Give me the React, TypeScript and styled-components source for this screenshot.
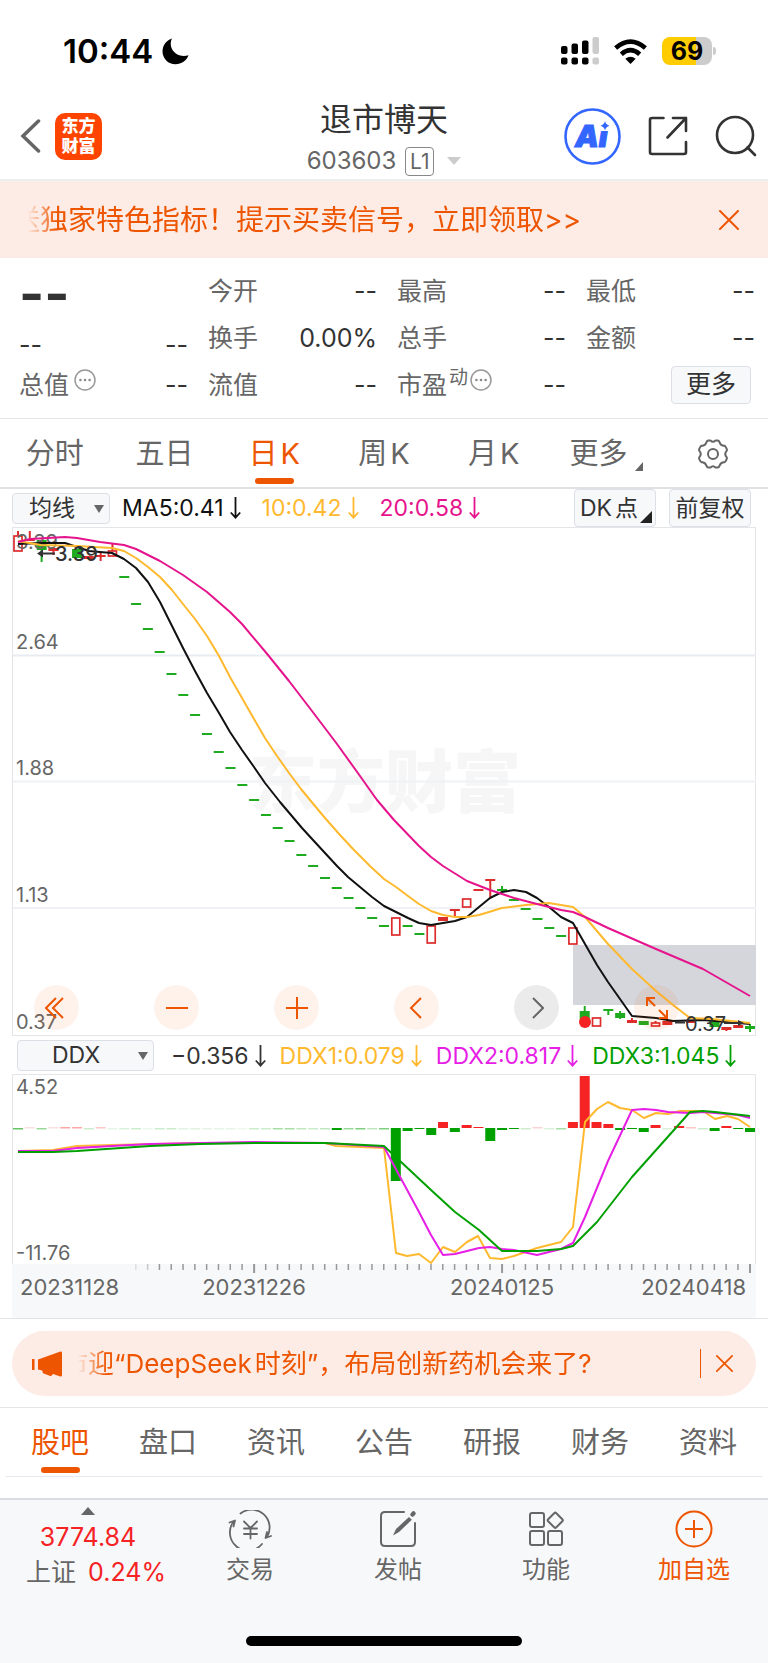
import React from 'react';
import styled, { createGlobalStyle } from 'styled-components';

const ORANGE = '#ee5500';
const GREY = '#666666';
const INK = '#333333';
const LINE = '#e3e5e9';
const PANEL = '#f7f8fa';
const PEACH = '#fdece5';
const UP = '#f52323';
const DOWN = '#00a000';
const YELLOW = '#ffb92e';
const PINK = '#e6148c';
const MAGENTA = '#e61ee6';

const Global = createGlobalStyle`
  *, *::before, *::after { box-sizing: border-box; }
  body {
    margin: 0;
    background: #fff;
    color: ${INK};
    font-family: Inter, "Noto Sans CJK SC", sans-serif;
    -webkit-font-smoothing: antialiased;
  }
  button, select {
    font: inherit;
    color: inherit;
    margin: 0;
    padding: 0;
    border: 0;
    background: none;
    cursor: pointer;
  }
  svg { display: block; flex: none; }
`;

/* ---------- status bar ---------- */

const StatusBar = styled.div`
  display: flex;
  justify-content: space-between;
  align-items: center;
  height: 96px;
  padding: 6px 52px 0 63px;
`;

const StatusGroup = styled.div<{ $gap: number }>`
  display: flex;
  align-items: center;
  gap: ${p => p.$gap}px;
`;

const Clock = styled.span`
  font-size: 33px;
  line-height: 40px;
  font-weight: 600;
  color: #000;
`;

const BatteryBody = styled.span`
  display: flex;
  align-items: center;
  justify-content: center;
  width: 50px;
  height: 28px;
  border-radius: 8px;
  background: linear-gradient(90deg, #ffcc00 69%, #cccccc 69%);
  color: #000;
  font-size: 25px;
  line-height: 28px;
  font-weight: 700;
`;

const Battery = styled.span`
  display: flex;
  align-items: center;
  gap: 1px;
  &::after {
    content: '';
    width: 3px;
    height: 8px;
    border-radius: 0 3px 3px 0;
    background: #cccccc;
  }
`;

/* ---------- header ---------- */

const Header = styled.header`
  display: grid;
  grid-template-columns: 1fr auto 1fr;
  align-items: center;
  height: 85px;
  padding: 0 11px 4px;
  border-bottom: 2px solid #eceef0;
`;

const HeaderSide = styled.div<{ $end?: boolean }>`
  display: flex;
  align-items: center;
  justify-content: ${p => (p.$end ? 'flex-end' : 'flex-start')};
  gap: ${p => (p.$end ? 27 : 14)}px;
  padding: 0 0 3px ${p => (p.$end ? 0 : 9)}px;
`;

const AppLogo = styled.span`
  display: flex;
  align-items: center;
  justify-content: center;
  width: 47px;
  height: 47px;
  border-radius: 10px;
  background: #ff4400;
  color: #fff;
  font-size: 17px;
  line-height: 20px;
  font-weight: 900;
  text-align: center;
`;

const TitleBlock = styled.div`
  display: flex;
  flex-direction: column;
  align-items: center;
  padding-top: 1px;
`;

const Title = styled.h1`
  margin: 0;
  font-size: 32px;
  line-height: 46px;
  font-weight: 400;
`;

const CodeLine = styled.div`
  display: flex;
  align-items: center;
  height: 36px;
  color: ${GREY};
  font-size: 24px;
  line-height: 30px;
`;

const LevelTag = styled.span`
  margin: 0 13px 0 9px;
  width: 29px;
  height: 29px;
  border: 1px solid #888;
  border-radius: 4px;
  font-size: 21px;
  line-height: 27px;
  text-align: center;
`;

const IconButton = styled.button`
  display: flex;
  align-items: center;
  justify-content: center;
`;

/* ---------- notices ---------- */

const Promo = styled.div`
  display: flex;
  align-items: center;
  height: 77px;
  padding: 0 29px 0 12px;
  background: ${PEACH};
  color: ${ORANGE};
`;

const Ticker = styled.div<{ $size: number; $fade: number }>`
  flex: 1;
  white-space: nowrap;
  font-size: ${p => p.$size}px;
  line-height: 40px;
  mask-image: linear-gradient(90deg, transparent ${p => p.$fade}px, #000 ${p => p.$fade + 28}px);
`;

const NewsWrap = styled.div`
  padding: 12px 12px 11px;
  border-top: 1px solid ${LINE};
  border-bottom: 1px solid ${LINE};
`;

const NewsPill = styled.div`
  display: flex;
  align-items: center;
  height: 65px;
  padding: 0 23px 0 20px;
  border-radius: 33px;
  background: ${PEACH};
  color: ${ORANGE};
`;

const NewsDivider = styled.span`
  width: 1px;
  height: 29px;
  margin-right: 15px;
  background: ${ORANGE};
`;

/* ---------- quote grid ---------- */

const Quote = styled.section`
  display: grid;
  grid-template-columns: repeat(4, 1fr);
  grid-template-rows: repeat(3, 47px);
  column-gap: 20px;
  padding: 9px 13px 10px 19px;
  border-bottom: 1px solid ${LINE};
`;

const QuoteCell = styled.div<{ $drop?: number }>`
  display: flex;
  align-items: center;
  justify-content: space-between;
  padding-top: ${p => p.$drop ?? 0}px;
  font-size: 25px;
  line-height: 32px;
`;

const QuoteLabel = styled.span`
  display: flex;
  align-items: center;
  color: ${GREY};
`;

const Price = styled.strong`
  font-size: 54px;
  line-height: 32px;
  font-weight: 700;
`;

const Superscript = styled.span`
  align-self: flex-start;
  margin: -3px 2px 0 2px;
  font-size: 19px;
  line-height: 24px;
`;

const InfoButton = styled.button<{ $gap?: boolean }>`
  margin: -9px 0 0 ${p => (p.$gap ? 5 : 0)}px;
`;

const MoreCell = styled.div`
  display: flex;
  justify-content: flex-end;
  align-items: center;
  padding-right: 4px;
`;

const BoxButton = styled.button<{ $width: number; $corner?: boolean }>`
  position: relative;
  width: ${p => p.$width}px;
  height: 38px;
  padding-right: ${p => (p.$corner ? 12 : 0)}px;
  border: 1px solid #dcdfe5;
  border-radius: 4px;
  background: ${PANEL};
  line-height: 34px;
  white-space: nowrap;
`;

const MoreLabel = styled.span`
  font-size: 25px;
`;

/* ---------- tabs ---------- */

const TabBar = styled.nav<{ $inset?: boolean }>`
  display: grid;
  grid-template-columns: repeat(7, 1fr);
  height: ${p => (p.$inset ? 69 : 70)}px;
  margin: 0 ${p => (p.$inset ? 6 : 0)}px;
  border-bottom: ${p => (p.$inset ? '1px solid #e6e8ee' : '2px solid #dfe1e5')};
`;

const Tab = styled.button<{ $active?: boolean }>`
  display: flex;
  flex-direction: column;
  align-items: center;
  padding-top: 15px;
  color: ${p => (p.$active ? ORANGE : GREY)};
  font-size: 29px;
  line-height: 40px;
  &::after {
    content: '';
    width: 39px;
    height: 6px;
    margin-top: 4px;
    border-radius: 3px;
    background: ${p => (p.$active ? ORANGE : 'transparent')};
  }
`;

const TabText = styled.span`
  display: flex;
  align-items: center;
  height: 40px;
`;

const Latin = styled.span`
  margin-left: 3px;
`;

const TabCorner = styled.svg`
  align-self: flex-end;
  margin: 0 -6px 3px 8px;
`;

/* ---------- indicator rows ---------- */

const IndicatorRow = styled.div<{ $sub?: boolean }>`
  display: flex;
  align-items: center;
  height: ${p => (p.$sub ? 37 : 38)}px;
  padding: 0 17px 0 ${p => (p.$sub ? 17 : 12)}px;
  font-size: 23px;
`;

const SelectBox = styled.label<{ $width: number }>`
  position: relative;
  width: ${p => p.$width}px;
  height: 31px;
  margin-right: ${p => (p.$width > 100 ? 17 : 12)}px;
  border: 1px solid #dcdfe5;
  border-radius: 4px;
  background: ${PANEL};
  svg { position: absolute; right: 5px; top: 11px; pointer-events: none; }
`;

const Select = styled.select<{ $pad: number }>`
  display: block;
  appearance: none;
  width: 100%;
  height: 29px;
  padding-left: ${p => p.$pad}px;
  line-height: 29px;
  outline: none;
`;

const Reading = styled.span<{ $color: string; $gap: number }>`
  display: flex;
  align-items: center;
  gap: 6px;
  margin-right: ${p => p.$gap}px;
  color: ${p => p.$color};
  white-space: nowrap;
`;

const RowButtons = styled.div`
  display: flex;
  gap: 13px;
  margin-left: auto;
`;

const Corner = styled.svg`
  position: absolute;
  right: 3px;
  bottom: 3px;
`;

/* ---------- charts ---------- */

const ChartBox = styled.div`
  position: relative;
  margin: 0 12px;
`;

const ChartSvg = styled.svg`
  width: 100%;
  height: auto;
`;

const ChartControls = styled.div`
  position: absolute;
  left: 22px;
  bottom: 7px;
  display: flex;
  gap: 75px;
`;

const RoundButton = styled.button<{ $muted?: boolean }>`
  display: flex;
  align-items: center;
  justify-content: center;
  width: 45px;
  height: 45px;
  border-radius: 50%;
  color: ${p => (p.$muted ? GREY : ORANGE)};
  background: ${p => (p.$muted ? 'rgba(0, 0, 0, 0.08)' : 'rgba(238, 85, 0, 0.08)')};
`;

const Axis = styled.div`
  margin: 0 12px;
  background: ${PANEL};
`;

/* ---------- bottom bar ---------- */

const BottomBar = styled.footer`
  margin-top: 21px;
  border-top: 2px solid #dadde1;
  background: ${PANEL};
`;

const BottomNav = styled.nav`
  display: grid;
  grid-template-columns: 176fr repeat(4, 148fr);
  height: 136px;
`;

const IndexButton = styled.button`
  display: flex;
  flex-direction: column;
  align-items: center;
  padding-top: 7px;
  color: ${UP};
  font-size: 25px;
  line-height: 35px;
`;

const IndexValue = styled.span`
  margin-top: 5px;
`;

const IndexLine = styled.span`
  display: flex;
  gap: 12px;
  padding-left: 16px;
`;

const IndexName = styled.span`
  color: ${GREY};
`;

const NavButton = styled.button<{ $accent?: boolean }>`
  display: flex;
  flex-direction: column;
  align-items: center;
  gap: 6px;
  padding-top: 10px;
  color: ${p => (p.$accent ? ORANGE : GREY)};
  font-size: 24px;
  line-height: 32px;
`;

const HomeIndicator = styled.div`
  width: 36%;
  height: 10px;
  margin: 0 auto;
  border-radius: 5px;
  background: #000;
`;

const HomeArea = styled.div`
  height: 27px;
`;

/* ---------- chart data ---------- */

const STEP = 732 / 62;
const cx = (i: number) => 18 + STEP * i;

const FALL = [
  577, 604, 629, 652, 674, 695, 715, 734, 752, 768, 785, 800, 815, 828, 841, 855,
  866, 878, 888, 898, 908, 918, 926,
];

type Candle = { i: number; top: number; bottom: number; up?: boolean; hollow?: boolean; high?: number; low?: number };

const CANDLES: Candle[] = [
  { i: 0, top: 536, bottom: 551, up: true, hollow: true, high: 531 },
  { i: 1, top: 539, bottom: 541, up: true, high: 531 },
  { i: 2, top: 540, bottom: 550, low: 562 },
  { i: 3, top: 548, bottom: 551, up: true, low: 555 },
  { i: 5, top: 549, bottom: 558 },
  { i: 6, top: 556, bottom: 559, up: true },
  { i: 7, top: 555, bottom: 557, up: true, high: 552, low: 561 },
  { i: 8, top: 551, bottom: 556, up: true, hollow: true, high: 544 },
  ...FALL.map((y, k) => ({ i: 9 + k, top: y - 1, bottom: y + 1 })),
  { i: 32, top: 918, bottom: 935, up: true, hollow: true },
  { i: 33, top: 925, bottom: 927 },
  { i: 34, top: 933, bottom: 935 },
  { i: 35, top: 926, bottom: 943, up: true, hollow: true },
  { i: 36, top: 917, bottom: 921, up: true },
  { i: 37, top: 909, bottom: 911, up: true, low: 917 },
  { i: 38, top: 899, bottom: 907, up: true, hollow: true },
  { i: 39, top: 889, bottom: 891, up: true },
  { i: 40, top: 879, bottom: 881, up: true, low: 898 },
  { i: 41, top: 889, bottom: 891, high: 886 },
  { i: 42, top: 899, bottom: 901 },
  { i: 43, top: 908, bottom: 910 },
  { i: 44, top: 918, bottom: 920 },
  { i: 45, top: 927, bottom: 929 },
  { i: 46, top: 935, bottom: 937 },
  { i: 47, top: 928, bottom: 944, up: true, hollow: true },
  { i: 48, top: 1011, bottom: 1020, high: 1006 },
  { i: 49, top: 1018, bottom: 1026, up: true, hollow: true },
  { i: 50, top: 1009, bottom: 1011, low: 1015 },
  { i: 51, top: 1013, bottom: 1018, high: 1011, low: 1019 },
  { i: 52, top: 1020, bottom: 1023, up: true, high: 1018 },
  { i: 53, top: 1021, bottom: 1025 },
  { i: 54, top: 1023, bottom: 1026, up: true, hollow: true, high: 1021 },
  { i: 55, top: 1021, bottom: 1025, up: true },
  { i: 57, top: 1020, bottom: 1023, up: true },
  { i: 58, top: 1019, bottom: 1021 },
  { i: 59, top: 1021, bottom: 1027 },
  { i: 60, top: 1027, bottom: 1030, up: true, low: 1031 },
  { i: 61, top: 1025, bottom: 1028, up: true },
  { i: 62, top: 1026, bottom: 1029, high: 1024, low: 1032 },
];

const MA5 =
  '18,544 41,543 65,543 77,547 89,551 100,552 112,553 124,559 136,568 148,582 160,602 172,626 183,648 195,671 207,693 219,713 230,732 242,750 254,767 265,783 280,802 302,828 313,840 325,853 337,866 348,877 360,887 372,897 384,906 396,912 408,918 419,923 431,925 443,923 455,921 467,917 479,907 490,898 502,892 514,890 526,892 537,898 549,907 561,917 573,923 585,944 597,965 608,982 620,999 632,1016 656,1018 673,1021 703,1020 727,1022 750,1024';
const MA10 =
  '18,541 41,545 77,546 112,548 124,551 136,558 148,567 160,577 172,590 183,604 195,619 207,636 219,656 230,677 242,698 254,719 265,738 277,756 289,773 301,789 310,800 325,818 340,835 354,850 370,866 384,879 396,887 408,896 419,904 431,911 443,915 455,917 467,917 479,915 502,908 526,905 549,903 573,907 585,917 608,944 632,969 656,991 673,1005 690,1018 713,1019 750,1023';
const MA20 =
  '18,542 30,539 65,537 77,538 100,542 124,545 136,549 148,555 160,561 183,575 207,592 230,612 242,624 268,655 289,681 312,711 337,744 360,776 377,800 394,820 419,846 431,857 443,866 467,881 490,890 514,898 537,904 561,910 573,912 585,917 608,928 656,949 703,969 750,996';

const DDX1 =
  '18,1151 53,1150 77,1146 112,1145 200,1143 325,1143 336,1146 384,1148 396,1253 407,1256 419,1254 431,1263 443,1247 455,1252 467,1242 478,1236 490,1258 502,1259 514,1256 537,1248 561,1242 573,1227 585,1122 597,1109 608,1102 620,1108 632,1110 644,1118 656,1113 668,1114 680,1111 703,1111 715,1119 727,1116 738,1119 750,1127';
const DDX2 =
  '18,1151 53,1151 77,1148 112,1146 150,1144 254,1142 325,1143 384,1147 419,1212 431,1235 443,1255 455,1254 479,1248 490,1247 502,1249 514,1250 537,1255 561,1249 573,1243 585,1217 608,1161 632,1110 644,1109 656,1110 668,1112 690,1113 703,1112 715,1113 738,1115 750,1118';
const DDX3 =
  '18,1152 53,1152 77,1151 150,1146 200,1144 254,1143 325,1143 384,1146 431,1190 455,1212 479,1230 502,1251 537,1251 549,1250 561,1249 573,1246 597,1222 632,1177 690,1112 703,1111 715,1112 750,1116';

/* Signed bar lengths in pixels; a positive value rises above the zero line. */
const DDX_BARS: Record<number, number> = {
  27: -2, 32: -53, 33: -3, 34: -1, 35: -7, 36: 6, 37: -4, 38: 3, 39: 1, 40: -13, 41: -2, 42: -1,
  47: 6, 48: 52, 49: 6, 50: 4, 51: -2, 52: -1, 53: -4, 54: 3, 56: 2, 59: -3, 60: 2, 61: -1, 62: -4,
};

/* Days whose flow rounds to nearly nothing are drawn as faint dashes. */
const FAINT: [number, boolean, number][] = [
  [0, false, 0.6], [1, true, 0.15], [2, false, 0.4], [3, true, 0.15], [4, true, 0.4], [5, true, 0.4],
  [6, false, 0.2], [7, true, 0.25], [8, false, 0.1], [9, false, 0.15], [10, false, 0.2], [11, false, 0.08],
  [12, false, 0.2], [13, false, 0.2], [14, false, 0.12], [15, false, 0.12], [16, false, 0.1], [17, false, 0.1],
  [18, false, 0.1], [19, false, 0.08], [20, false, 0.2], [21, false, 0.2], [22, false, 0.35], [23, false, 0.35],
  [24, false, 0.25], [25, false, 0.2], [26, false, 0.25], [28, false, 0.4], [29, false, 0.5], [30, false, 0.25],
  [31, false, 0.5], [43, false, 0.2], [44, true, 0.2], [45, false, 0.15], [46, false, 0.35], [55, false, 0.15],
  [57, true, 0.25], [58, false, 0.2],
];

/* ---------- small drawings ---------- */

const DownArrow = () => (
  <svg width="11" height="22" viewBox="0 0 11 22" fill="none" stroke="currentColor" strokeWidth="1.8" aria-hidden="true">
    <path d="M5.5 0v21M.8 15.5l4.7 5.2 4.7-5.2" />
  </svg>
);

const Caret = () => (
  <svg width="10" height="8" viewBox="0 0 10 8" aria-hidden="true">
    <path d="M0 0h10L5 8z" fill="#666" />
  </svg>
);

const Cross = ({ size }: { size: number }) => (
  <svg width={size} height={size} viewBox="0 0 20 20" fill="none" stroke="currentColor" strokeWidth="2" strokeLinecap="round">
    <path d="M1 1l18 18M19 1L1 19" />
  </svg>
);

const InfoIcon = () => (
  <svg width="22" height="22" viewBox="0 0 22 22" fill="none" stroke="#999" strokeWidth="1.5">
    <circle cx="11" cy="11" r="10" />
    <g fill="#888" stroke="none">
      <circle cx="6.4" cy="11" r="1.3" />
      <circle cx="11" cy="11" r="1.3" />
      <circle cx="15.6" cy="11" r="1.3" />
    </g>
  </svg>
);

const Gear = () => (
  <svg width="32" height="30" viewBox="0 0 32 30" fill="none" stroke="#666" strokeWidth="2" strokeLinejoin="round">
    <path d="M11.5 1.5h2q2.5 2.4 5 0h2q1 0 1.6.9l.6 1.1q.8 2.7 3.7 3.3h1q1 .4 1.4 1.3l1 2q.5 1-.2 1.8-2.7 3.1 0 6.2.7.8.2 1.8l-1 2q-.4.9-1.4 1.3h-1q-2.9.6-3.7 3.3l-.6 1.1q-.6.9-1.6.9h-2q-2.5-2.4-5 0h-2q-1 0-1.6-.9l-.6-1.1q-.8-2.7-3.7-3.3h-1q-1-.4-1.4-1.3l-1-2q-.5-1 .2-1.8 2.7-3.1 0-6.2-.7-.8-.2-1.8l1-2q.4-.9 1.4-1.3h1q2.9-.6 3.7-3.3l.6-1.1q.6-.9 1.6-.9z" />
    <circle cx="16" cy="15" r="5" />
  </svg>
);

const CandleShape = ({ c }: { c: Candle }) => {
  const color = c.up ? '#dc2c2c' : '#1fab1f';
  const x = cx(c.i);
  return (
    <g stroke={color} strokeWidth="2" fill={c.hollow ? 'none' : color}>
      {c.high !== undefined && <path d={`M${x} ${c.high}V${c.top}`} />}
      {c.low !== undefined && <path d={`M${x} ${c.bottom}V${c.low}`} />}
      {c.hollow ? (
        <rect x={x - 4} y={c.top} width="8" height={c.bottom - c.top} strokeWidth="1.7" />
      ) : (
        <rect x={x - 5} y={c.top} width="10" height={c.bottom - c.top} stroke="none" />
      )}
    </g>
  );
};

const PriceChart = () => (
  <ChartSvg viewBox="12 527 744 510" role="img" aria-label="日K线图">
    <text x="385" y="807" textAnchor="middle" fontSize="68" fontWeight="900" fill="#f6f6f7">东方财富</text>
    <g fill="none" stroke="#e8ebf1">
      <rect x="12.5" y="527.5" width="743" height="508" stroke="#e3e5e8" />
      <path d="M13 655.5H756" strokeWidth="2" />
      <path d="M13 781.5H756" strokeWidth="2" stroke="#eff1f5" />
      <path d="M13 908H756" strokeWidth="2" stroke="#eff1f5" />
    </g>
    <rect x="573" y="945" width="183" height="60" fill="#d4d6dc" />
    {CANDLES.map(c => <CandleShape key={c.i} c={c} />)}
    <g fontSize="20" fill={GREY}>
      <text x="16" y="549">3.39</text>
      <text x="16" y="649">2.64</text>
      <text x="16" y="775">1.88</text>
      <text x="16" y="902">1.13</text>
      <text x="16" y="1029">0.37</text>
    </g>
    <g fill="none" strokeWidth="2" strokeLinejoin="round">
      <polyline points={MA5} stroke="#111" />
      <polyline points={MA10} stroke={YELLOW} />
      <polyline points={MA20} stroke={PINK} />
    </g>
    <circle cx="585" cy="1022" r="6" fill={UP} />
    <g fontSize="20" fontWeight="500" fill={INK}>
      <text x="55" y="561">3.39</text>
      <text x="685" y="1031" fontWeight="400">0.37</text>
      <path d="M37 553.5l6-4v3h12v2H43v3z" />
      <path d="M744 1023l-6-3v2h-14v2h14v2z" />
      <path d="M675 1021.5h10v2h-10z" />
    </g>
  </ChartSvg>
);

const DdxChart = () => (
  <ChartSvg viewBox="12 1074 744 190" role="img" aria-label="DDX">
    <path d="M12.5 1264V1074.5H755.5V1264" fill="none" stroke="#e3e5e8" />
    {FAINT.map(([i, up, o]) => (
      <rect key={i} x={cx(i) - 5} y={up ? 1127 : 1128} width="10" height="1.5" fill={up ? UP : DOWN} opacity={o} />
    ))}
    {Object.entries(DDX_BARS).map(([i, v]) => (
      <rect key={i} x={cx(+i) - 5} y={v > 0 ? 1128 - v : 1128} width="10" height={Math.abs(v)} fill={v > 0 ? UP : DOWN} />
    ))}
    <g fontSize="20" fill={GREY}>
      <text x="16" y="1094">4.52</text>
      <text x="16" y="1260">-11.76</text>
    </g>
    <g fill="none" strokeWidth="2" strokeLinejoin="round">
      <polyline points={DDX1} stroke={YELLOW} />
      <polyline points={DDX2} stroke={MAGENTA} />
      <polyline points={DDX3} stroke={DOWN} />
    </g>
  </ChartSvg>
);

const TICKS = Array.from({ length: 53 }, (_, k) => k + 10);

const DateAxis = () => (
  <Axis>
    <ChartSvg viewBox="12 1264 744 54" role="img" aria-label="日期">
      {TICKS.map(i => {
        const major = i === 20 || i === 41 || i === 62;
        return (
          <rect
            key={i}
            x={cx(i) - 1}
            y="1264"
            width={major ? 2 : 1.5}
            height={major ? 9 : 6}
            fill="#999"
            opacity={i === 10 ? 0.25 : i === 11 ? 0.5 : 1}
          />
        );
      })}
      <g fontSize="22" fill={GREY}>
        <text x="20" y="1295">20231128</text>
        <text x="254" y="1295" textAnchor="middle">20231226</text>
        <text x="502" y="1295" textAnchor="middle">20240125</text>
        <text x="746" y="1295" textAnchor="end">20240418</text>
      </g>
    </ChartSvg>
  </Axis>
);

/* ---------- page ---------- */

const DETAIL_TABS = ['股吧', '盘口', '资讯', '公告', '研报', '财务', '资料'];

const Cell = ({ label, value = '--' }: { label: string; value?: string }) => (
  <QuoteCell>
    <QuoteLabel>{label}</QuoteLabel>
    <span>{value}</span>
  </QuoteCell>
);

export default function App() {
  return (
    <>
      <Global />
      <StatusBar>
        <StatusGroup $gap={9}>
          <Clock>10:44</Clock>
          <svg width="27" height="27" viewBox="0 0 27 27" aria-label="勿扰">
            <path d="M10 .5C5 2 .5 7 .5 13.2c0 7.300 5.700 13.100 13 13.100 6 0 11-3.600 13-9-8 2.600-16-2-17.500-9C8.400 5.500 8.800 2.800 10 .5z" />
          </svg>
        </StatusGroup>
        <StatusGroup $gap={15}>
          <svg width="38" height="28" viewBox="0 0 38 28" aria-label="信号">
            <g>
              <rect x="0" y="9" width="6.5" height="8" rx="2" />
              <rect x="10.5" y="6.5" width="6.5" height="10.5" rx="2" />
              <rect x="21" y="3.5" width="6.5" height="13.5" rx="2" />
              <rect x="0" y="20.5" width="6.5" height="7" rx="2" />
              <rect x="10.5" y="20.5" width="6.5" height="7" rx="2" />
              <rect x="21" y="20.5" width="6.5" height="7" rx="2" />
            </g>
            <g fill="#ccc">
              <rect x="31.5" y="0" width="6.5" height="17" rx="2" />
              <rect x="31.5" y="20.5" width="6.5" height="7" rx="2" />
            </g>
          </svg>
          <svg width="33" height="25" viewBox="0 0 33 25" fill="none" stroke="#000" strokeWidth="4.6" aria-label="无线网络">
            <path d="M1.6 9Q16.5-3.8 31.4 9" />
            <path d="M7.3 15.2q9.200-8 18.400 0" />
            <path d="M16.5 25l-5.200-5.300q5.200-4 10.400 0z" fill="#000" stroke="none" />
          </svg>
          <Battery><BatteryBody>69</BatteryBody></Battery>
        </StatusGroup>
      </StatusBar>

      <Header>
        <HeaderSide>
          <IconButton aria-label="返回">
            <svg width="21" height="34" viewBox="0 0 21 34" fill="none" stroke="#666" strokeWidth="3.5" strokeLinecap="round">
              <path d="M18.5 2L3 17l15.500 15" />
            </svg>
          </IconButton>
          <AppLogo>东方<br />财富</AppLogo>
        </HeaderSide>
        <TitleBlock>
          <Title>退市博天</Title>
          <CodeLine>
            603603
            <LevelTag>L1</LevelTag>
            <svg width="14" height="8" viewBox="0 0 14 8"><path d="M0 0h14L7 8z" fill="#ccc" /></svg>
          </CodeLine>
        </TitleBlock>
        <HeaderSide $end>
          <IconButton aria-label="Ai">
            <svg width="57" height="57" viewBox="0 0 57 57">
              <circle cx="28.5" cy="28.5" r="27" fill="none" stroke="#3366ff" strokeWidth="2.6" />
              <text x="11" y="39" fontSize="30" fontWeight="900" fontStyle="italic" fill="#3366ff" stroke="#3366ff">Ai</text>
              <path d="M35 12h13v11H35z" fill="#fff" />
              <path d="M41 13q.8 3.800 4.500 4.800-3.700 1-4.500 4.700-.8-3.700-4.500-4.700 3.700-1 4.500-4.800z" fill="#3366ff" />
            </svg>
          </IconButton>
          <IconButton aria-label="分享">
            <svg width="40" height="40" viewBox="0 0 40 40" fill="none" stroke="#333" strokeWidth="2.6" strokeLinecap="round" strokeLinejoin="round">
              <path d="M15.5 2H4Q2 2 2 4v32q0 2 2 2h32q2 0 2-2V26M25 2h13v13M38 2L19.5 21.5" />
            </svg>
          </IconButton>
          <IconButton aria-label="搜索">
            <svg width="42" height="42" viewBox="0 0 42 42" fill="none" stroke="#333" strokeWidth="2.6" strokeLinecap="round">
              <circle cx="20" cy="20" r="18" />
              <path d="M32.5 32.5l7.500 7.500" />
            </svg>
          </IconButton>
        </HeaderSide>
      </Header>

      <Promo>
        <Ticker $size={28} $fade={16}>送独家特色指标！提示买卖信号，立即领取&gt;&gt;</Ticker>
        <IconButton aria-label="关闭"><Cross size={20} /></IconButton>
      </Promo>

      <Quote>
        <QuoteCell $drop={6}><Price>--</Price></QuoteCell>
        <Cell label="今开" />
        <Cell label="最高" />
        <Cell label="最低" />
        <QuoteCell $drop={14}><span>--</span><span>--</span></QuoteCell>
        <Cell label="换手" value="0.00%" />
        <Cell label="总手" />
        <Cell label="金额" />
        <QuoteCell>
          <QuoteLabel>总值<InfoButton $gap aria-label="总值说明"><InfoIcon /></InfoButton></QuoteLabel>
          <span>--</span>
        </QuoteCell>
        <Cell label="流值" />
        <QuoteCell>
          <QuoteLabel>
            市盈<Superscript>动</Superscript>
            <InfoButton aria-label="市盈说明"><InfoIcon /></InfoButton>
          </QuoteLabel>
          <span>--</span>
        </QuoteCell>
        <MoreCell>
          <BoxButton $width={80}><MoreLabel>更多</MoreLabel></BoxButton>
        </MoreCell>
      </Quote>

      <TabBar aria-label="周期">
        <Tab><TabText>分时</TabText></Tab>
        <Tab><TabText>五日</TabText></Tab>
        <Tab $active><TabText>日<Latin>K</Latin></TabText></Tab>
        <Tab><TabText>周<Latin>K</Latin></TabText></Tab>
        <Tab><TabText>月<Latin>K</Latin></TabText></Tab>
        <Tab>
          <TabText>
            更多
            <TabCorner width="8" height="9" viewBox="0 0 8 9"><path d="M8 0v9H0z" fill="#666" /></TabCorner>
          </TabText>
        </Tab>
        <Tab aria-label="设置"><TabText><Gear /></TabText></Tab>
      </TabBar>

      <IndicatorRow>
        <SelectBox $width={98}>
          <Select $pad={16} aria-label="主图指标"><option>均线</option></Select>
          <Caret />
        </SelectBox>
        <Reading $color="#111" $gap={21}>MA5:0.41<DownArrow /></Reading>
        <Reading $color={YELLOW} $gap={21}>10:0.42<DownArrow /></Reading>
        <Reading $color={PINK} $gap={0}>20:0.58<DownArrow /></Reading>
        <RowButtons>
          <BoxButton $width={82} $corner>
            DK<Latin>点</Latin>
            <Corner width="12" height="12" viewBox="0 0 12 12"><path d="M12 0v12H0z" fill="#222" /></Corner>
          </BoxButton>
          <BoxButton $width={82}>前复权</BoxButton>
        </RowButtons>
      </IndicatorRow>

      <ChartBox>
        <PriceChart />
        <ChartControls>
          <RoundButton aria-label="最早">
            <svg width="24" height="22" viewBox="0 0 24 22" fill="none" stroke="currentColor" strokeWidth="2">
              <path d="M11 1L1 11l10 10M18 1L8 11l10 10" />
            </svg>
          </RoundButton>
          <RoundButton aria-label="缩小">
            <svg width="22" height="22" viewBox="0 0 22 22" stroke="currentColor" strokeWidth="2"><path d="M0 11h22" /></svg>
          </RoundButton>
          <RoundButton aria-label="放大">
            <svg width="22" height="22" viewBox="0 0 22 22" stroke="currentColor" strokeWidth="2"><path d="M0 11h22M11 0v22" /></svg>
          </RoundButton>
          <RoundButton aria-label="向前">
            <svg width="16" height="22" viewBox="0 0 16 22" fill="none" stroke="currentColor" strokeWidth="2"><path d="M12 1L2 11l10 10" /></svg>
          </RoundButton>
          <RoundButton $muted aria-label="向后">
            <svg width="14" height="22" viewBox="0 0 14 22" fill="none" stroke="currentColor" strokeWidth="2"><path d="M3 1l10 10L3 21" /></svg>
          </RoundButton>
          <RoundButton aria-label="全屏">
            <svg width="22" height="22" viewBox="0 0 22 22" fill="none" stroke="currentColor" strokeWidth="2">
              <path d="M1 9V1h8M1 1l8 8M21 13v8h-8M21 21l-8-8" />
            </svg>
          </RoundButton>
        </ChartControls>
      </ChartBox>

      <IndicatorRow $sub>
        <SelectBox $width={137}>
          <Select $pad={34} aria-label="副图指标"><option>DDX</option></Select>
          <Caret />
        </SelectBox>
        <Reading $color={INK} $gap={14}>−0.356<DownArrow /></Reading>
        <Reading $color={YELLOW} $gap={14}>DDX1:0.079<DownArrow /></Reading>
        <Reading $color={MAGENTA} $gap={14}>DDX2:0.817<DownArrow /></Reading>
        <Reading $color={DOWN} $gap={0}>DDX3:1.045<DownArrow /></Reading>
      </IndicatorRow>
      <ChartBox><DdxChart /></ChartBox>
      <DateAxis />

      <NewsWrap>
        <NewsPill>
          <svg width="30" height="26" viewBox="0 0 30 26" fill="currentColor" aria-hidden="true">
            <path d="M0 8h2.500v11H0zM6 8.500L28.500.5q1.500-.3 1.500 1.200v22.600q0 1.500-1.500 1.200L21 23l-2 2.200-8-3-.8-2.700L6 18.500z" />
          </svg>
          <Ticker $size={26} $fade={16}>市迎“DeepSeek<Latin>时刻</Latin>”，布局创新药机会来了?</Ticker>
          <NewsDivider />
          <IconButton aria-label="关闭资讯"><Cross size={17} /></IconButton>
        </NewsPill>
      </NewsWrap>

      <TabBar $inset aria-label="资料">
        {DETAIL_TABS.map((t, i) => (
          <Tab key={t} $active={i === 0}><TabText>{t}</TabText></Tab>
        ))}
      </TabBar>

      <BottomBar>
        <BottomNav aria-label="底部">
          <IndexButton>
            <svg width="14" height="8" viewBox="0 0 14 8"><path d="M7 0l7 8H0z" fill="#666" /></svg>
            <IndexValue>3774.84</IndexValue>
            <IndexLine><IndexName>上证</IndexName>0.24%</IndexLine>
          </IndexButton>
          <NavButton>
            <svg width="44" height="38" viewBox="0 0 44 38" fill="none" stroke="currentColor" strokeWidth="1.8" strokeLinecap="round" strokeLinejoin="round">
              <path d="M12.5 3.500A18 18 0 0 1 39 27M34 34A18 18 0 0 1 6 11M1.500 12.500L7 10.500l-1.500 6M43 26l-5.500 2 1.500-6" />
              <path d="M16 11.500l6.500 6.500 6.500-6.500M16 18.500h13M16 24h13M22.500 18v10.500" />
            </svg>
            交易
          </NavButton>
          <NavButton>
            <svg width="38" height="38" viewBox="0 0 38 38" fill="none" stroke="currentColor" strokeWidth="2" strokeLinecap="round">
              <path d="M25 2H6Q2 2 2 6v26q0 4 4 4h26q4 0 4-4V13" />
              <path d="M14 25.500l3-6.500L30 7l2.800 2.800L20 22z" fill="currentColor" stroke="none" />
              <path d="M33.5 4.500l1-1" strokeWidth="4.500" />
            </svg>
            发帖
          </NavButton>
          <NavButton>
            <svg width="38" height="38" viewBox="0 0 38 38" fill="none" stroke="currentColor" strokeWidth="2" strokeLinejoin="round">
              <rect x="3" y="3" width="14" height="14" rx="2" />
              <rect x="3" y="21" width="14" height="14" rx="2" />
              <rect x="21" y="21" width="14" height="14" rx="2" />
              <rect x="22.5" y="4.5" width="11.5" height="11.5" rx="1.5" transform="rotate(45 28.250 10.250)" />
            </svg>
            功能
          </NavButton>
          <NavButton $accent>
            <svg width="38" height="38" viewBox="0 0 38 38" fill="none" stroke="currentColor" strokeWidth="2">
              <circle cx="19" cy="19" r="17.5" />
              <path d="M10 19h18M19 10v18" />
            </svg>
            加自选
          </NavButton>
        </BottomNav>
        <HomeArea><HomeIndicator /></HomeArea>
      </BottomBar>
    </>
  );
}
